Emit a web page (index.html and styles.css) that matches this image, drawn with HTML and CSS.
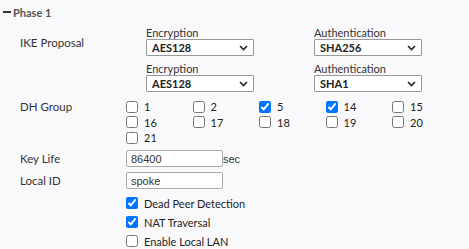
FILE: index.html
```html
<!DOCTYPE html>
<html lang="en">
<head>
  <meta charset="UTF-8">
  <meta name="viewport" content="width=device-width, initial-scale=1.0">
  <title>Phase 1</title>
  <link rel="stylesheet" href="styles.css">
</head>
<body>
  <div class="section-title">
    <span class="collapse-dash"></span>
    <span>Phase 1</span>
  </div>

  <div class="form-row ike-row">
    <label class="row-label">IKE Proposal</label>
    <div class="proposals">
      <div class="field">
        <span class="field-label">Encryption</span>
        <div class="select-wrap">
          <select><option>AES128</option></select>
          <svg class="chevron" width="9" height="6" viewBox="0 0 9 6"><path d="M1 1l3.5 3.5L8 1" fill="none" stroke="#222" stroke-width="1.6"/></svg>
        </div>
      </div>
      <div class="field">
        <span class="field-label">Authentication</span>
        <div class="select-wrap">
          <select><option>SHA256</option></select>
          <svg class="chevron" width="9" height="6" viewBox="0 0 9 6"><path d="M1 1l3.5 3.5L8 1" fill="none" stroke="#222" stroke-width="1.6"/></svg>
        </div>
      </div>
      <div class="field">
        <span class="field-label">Encryption</span>
        <div class="select-wrap">
          <select><option>AES128</option></select>
          <svg class="chevron" width="9" height="6" viewBox="0 0 9 6"><path d="M1 1l3.5 3.5L8 1" fill="none" stroke="#222" stroke-width="1.6"/></svg>
        </div>
      </div>
      <div class="field">
        <span class="field-label">Authentication</span>
        <div class="select-wrap">
          <select><option>SHA1</option></select>
          <svg class="chevron" width="9" height="6" viewBox="0 0 9 6"><path d="M1 1l3.5 3.5L8 1" fill="none" stroke="#222" stroke-width="1.6"/></svg>
        </div>
      </div>
    </div>
  </div>

  <div class="form-row dh-row">
    <label class="row-label">DH Group</label>
    <div class="dh-grid">
      <label class="check"><input type="checkbox"><span>1</span></label>
      <label class="check"><input type="checkbox"><span>2</span></label>
      <label class="check"><input type="checkbox" checked><span>5</span></label>
      <label class="check"><input type="checkbox" checked><span>14</span></label>
      <label class="check"><input type="checkbox"><span>15</span></label>
      <label class="check"><input type="checkbox"><span>16</span></label>
      <label class="check"><input type="checkbox"><span>17</span></label>
      <label class="check"><input type="checkbox"><span>18</span></label>
      <label class="check"><input type="checkbox"><span>19</span></label>
      <label class="check"><input type="checkbox"><span>20</span></label>
      <label class="check"><input type="checkbox"><span>21</span></label>
    </div>
  </div>

  <div class="form-row text-row keylife-row">
    <label class="row-label">Key Life</label>
    <div class="input-line">
      <input type="text" value="86400">
      <span class="unit">sec</span>
    </div>
  </div>

  <div class="form-row text-row localid-row">
    <label class="row-label">Local ID</label>
    <div class="input-line">
      <input type="text" value="spoke">
    </div>
  </div>

  <div class="form-row options-row">
    <span class="row-label"></span>
    <div class="options">
      <label class="check"><input type="checkbox" checked><span>Dead Peer Detection</span></label>
      <label class="check"><input type="checkbox" checked><span>NAT Traversal</span></label>
      <label class="check"><input type="checkbox"><span>Enable Local LAN</span></label>
    </div>
  </div>
</body>
</html>
```

FILE: styles.css
```css
body {
  font-family: 'Lato', 'Open Sans', Arial, sans-serif;
  font-size: 11px;
  color: #333;
  background: #f9f9fb;
  margin: 0;
  padding: 0;
}
.section-title {
  display: flex;
  align-items: center;
  gap: 2px;
  height: 16px;
  margin-top: 4px;
  padding-left: 3px;
  color: #555;
  font-weight: bold;
}
.collapse-dash {
  width: 8px;
  height: 2px;
  background: #333;
}
.form-row {
  display: grid;
  grid-template-columns: 106px 1fr;
  padding-left: 20px;
}
.row-label {
  color: #333;
  font-size: 11.5px;
}
.ike-row {
  margin-top: 6px;
}
.ike-row .row-label {
  padding-top: 10px;
}
.proposals {
  display: grid;
  grid-template-columns: 168px 168px;
  row-gap: 6px;
  padding-left: 20px;
}
.field {
  display: flex;
  flex-direction: column;
}
.field-label {
  height: 13px;
  line-height: 13px;
  color: #333;
}
.select-wrap {
  position: relative;
  width: 108px;
}
.select-wrap select {
  appearance: none;
  width: 100%;
  height: 17px;
  margin: 0;
  padding: 0 0 0 5px;
  border: 1px solid #999;
  border-radius: 1px;
  background: #fff;
  font-family: inherit;
  font-size: 11px;
  font-weight: bold;
  color: #222;
}
.chevron {
  position: absolute;
  right: 6px;
  top: 6px;
}
.dh-row {
  margin-top: 7px;
}
.dh-row .row-label {
  line-height: 15.5px;
}
.dh-grid {
  display: grid;
  grid-template-columns: repeat(5, 66.5px);
  grid-auto-rows: 15.5px;
}
.check {
  display: flex;
  align-items: center;
  gap: 6px;
  color: #222;
}
.check input {
  width: 12px;
  height: 12px;
  margin: 0;
}
.text-row .row-label {
  line-height: 17px;
}
.keylife-row {
  margin-top: 4.5px;
}
.localid-row {
  margin-top: 5px;
}
.input-line {
  display: flex;
  align-items: center;
}
.input-line input {
  width: 97px;
  height: 17px;
  box-sizing: border-box;
  margin: 0;
  padding: 0 4px;
  border: 1px solid #aaa;
  border-radius: 2px;
  background: #fff;
  font-family: 'Liberation Sans', Arial, sans-serif;
  font-size: 11px;
  color: #333;
}
.unit {
  font-family: 'Liberation Sans', Arial, sans-serif;
  font-size: 11px;
  color: #333;
}
.options-row {
  margin-top: 4.5px;
}
.options {
  display: grid;
  grid-auto-rows: 19px;
}
.options .check {
  font-size: 11px;
}
```
